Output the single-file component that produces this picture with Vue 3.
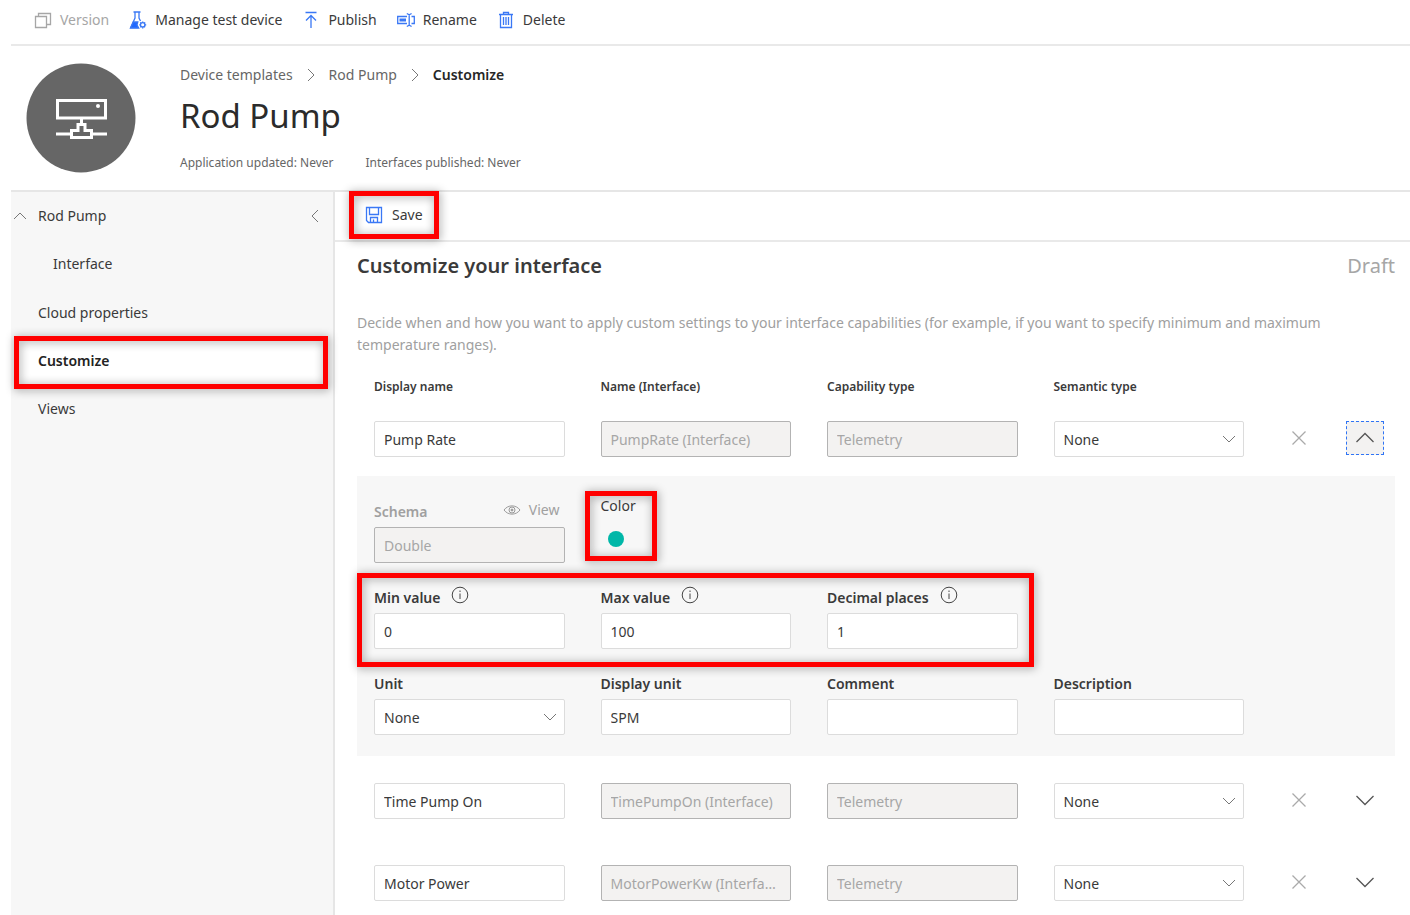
<script setup>
import { ref } from 'vue'

const rows = ref([
  { id: 'pump-rate', display: 'Pump Rate', name: 'PumpRate (Interface)', type: 'Telemetry', open: true },
  { id: 'time-pump-on', display: 'Time Pump On', name: 'TimePumpOn (Interface)', type: 'Telemetry', open: false },
  { id: 'motor-power', display: 'Motor Power', name: 'MotorPowerKw (Interface)', type: 'Telemetry', open: false }
])
const columns = ['Display name', 'Name (Interface)', 'Capability type', 'Semantic type']
const limits = [
  { id: 'min', label: 'Min value', value: '0' },
  { id: 'max', label: 'Max value', value: '100' },
  { id: 'decimals', label: 'Decimal places', value: '1' }
]
const texts = [
  { id: 'display-unit', label: 'Display unit', value: 'SPM' },
  { id: 'comment', label: 'Comment', value: '' },
  { id: 'description', label: 'Description', value: '' }
]
</script>

<template>
  <div class="page">
    <div class="toolbar" role="toolbar" aria-label="Template actions">
      <button type="button" disabled>
        <svg class="icon" viewBox="0 0 18 18"><path d="M1.5 5.5h11v11h-11zM4.500 5V2.500h12v11H13" /></svg>
        Version
      </button>
      <button type="button">
        <svg class="icon" viewBox="0 0 18 18">
          <path d="M4.500 1h7M6 1v6L1.700 16.500h7.500M10 1v6l1.500 3" />
          <path class="fill" d="M4.300 11h4.500l-.8 3 1.700 3H1.500z" />
          <circle cx="13.700" cy="13.800" r="2.200" />
          <path d="M13.700 10.400v1M13.700 16.200v1.200M10.300 13.800h1.100M16 13.800h1.200M11.300 11.400l.8.8M15.300 15.400l.8.8M16.100 11.400l-.8.8M12.100 15.400l-.8.8" />
        </svg>
        Manage test device
      </button>
      <button type="button">
        <svg class="icon" viewBox="0 0 18 18"><path d="M3.500 1.500h11M9 17V4.500M4 9.500l5-5 5 5" /></svg>
        Publish
      </button>
      <button type="button">
        <svg class="icon" viewBox="0 0 18 18">
          <path d="M10 5.500H.7v7H10M14.500 5.500h2.800v7h-2.800M9.800 2.500l2.400 1.300 2.400-1.300M12.200 3.800v10.400M9.800 15.500l2.400-1.300 2.400 1.300" />
          <path class="thick" d="M2.500 9H9" />
        </svg>
        Rename
      </button>
      <button type="button">
        <svg class="icon" viewBox="0 0 18 18"><path d="M2 3.500h14M6.500 3.500v-2h5v2M3.500 3.500v13h11v-13M6.500 6v8M9 6v8M11.500 6v8" /></svg>
        Delete
      </button>
    </div>

    <header class="header">
      <svg class="avatar" viewBox="0 0 110 110" aria-hidden="true">
        <circle class="disc" cx="55" cy="55" r="54.500" />
        <path d="M31.500 37.500h48v17.500h-48z" />
        <circle class="dot" cx="72" cy="43" r="2" />
        <path d="M55.500 55v6M30 71h14M67 71h14M45.500 67.500H52v-6h7v6h6.500v7h-20z" />
      </svg>
      <div class="heading">
        <nav class="crumbs" aria-label="Breadcrumb">
          <a href="#templates">Device templates</a>
          <svg class="chev" viewBox="0 0 16 16"><path d="M5 2l6 6-6 6" /></svg>
          <a href="#rod-pump">Rod Pump</a>
          <svg class="chev" viewBox="0 0 16 16"><path d="M5 2l6 6-6 6" /></svg>
          <strong>Customize</strong>
        </nav>
        <h1>Rod Pump</h1>
        <p class="meta"><span>Application updated: Never</span><span>Interfaces published: Never</span></p>
      </div>
    </header>

    <div class="body">
      <nav class="side" aria-label="Template sections">
        <button type="button" class="collapse" aria-label="Collapse navigation">
          <svg viewBox="0 0 16 16"><path d="M11 2L5 8l6 6" /></svg>
        </button>
        <a href="#rod-pump" class="parent">
          <svg viewBox="0 0 16 16"><path d="M2 11l6-6 6 6" /></svg>
          Rod Pump
        </a>
        <a href="#interface" class="child">Interface</a>
        <div class="group">
          <a href="#cloud">Cloud properties</a>
          <a href="#customize" class="current" aria-current="page">Customize</a>
          <a href="#views">Views</a>
        </div>
      </nav>

      <main class="main">
        <div class="commands">
          <button type="button" class="save">
            <svg class="icon" viewBox="0 0 18 18"><path d="M1.500 1.500h15v15H3.500l-2-2zM4.500 1.500v7h9v-7M5.500 16.500v-5h7v5M8.500 13.500v3" /></svg>
            Save
          </button>
        </div>

        <section class="content">
          <div class="title">
            <h2>Customize your interface</h2>
            <span>Draft</span>
          </div>
          <p class="intro">Decide when and how you want to apply custom settings to your interface capabilities (for example, if you want to specify minimum and maximum temperature ranges).</p>

          <div class="grid columns">
            <span v-for="c in columns" :key="c">{{ c }}</span>
          </div>

          <div v-for="row in rows" :key="row.id" class="entry">
            <div class="grid">
              <input :value="row.display" aria-label="Display name" />
              <input :value="row.name" aria-label="Name (Interface)" disabled />
              <input :value="row.type" aria-label="Capability type" disabled />
              <div class="drop">
                <select aria-label="Semantic type"><option>None</option></select>
                <svg viewBox="0 0 16 16"><path d="M2 5l6 6 6-6" /></svg>
              </div>
              <div class="actions">
                <button type="button" class="remove" :aria-label="'Remove ' + row.display">
                  <svg viewBox="0 0 16 16"><path d="M1.500 1.500l13 13M14.500 1.500l-13 13" /></svg>
                </button>
                <button type="button" :class="{ focused: row.open }" :aria-expanded="row.open" :aria-label="'Details of ' + row.display" @click="row.open = !row.open">
                  <svg viewBox="0 0 20 20"><path :d="row.open ? 'M1.500 14L10 5.500l8.500 8.500' : 'M1.500 6l8.500 8.500L18.500 6'" /></svg>
                </button>
              </div>
            </div>

            <div v-if="row.open" class="panel">
              <div class="grid">
                <div class="field">
                  <div class="schema-head">
                    <label for="schema">Schema</label>
                    <button type="button" disabled>
                      <svg viewBox="0 0 18 18"><path d="M1 9c4-5.500 12-5.500 16 0-4 5.500-12 5.500-16 0z" /><circle cx="9" cy="9" r="3" /><circle class="pupil" cx="9" cy="9" r="1" /></svg>
                      View
                    </button>
                  </div>
                  <input id="schema" value="Double" disabled />
                </div>
                <div class="color">
                  <span id="color-label">Color</span>
                  <button type="button" class="swatch" aria-labelledby="color-label"></button>
                </div>
              </div>
              <div class="grid">
                <div class="limits">
                  <div v-for="f in limits" :key="f.id" class="field">
                    <label :for="f.id">{{ f.label }}
                      <svg class="info" viewBox="0 0 18 18"><circle cx="9" cy="9" r="7.800" /><path d="M9 7.500v5.500M9 4.500v1.500" /></svg>
                    </label>
                    <input :id="f.id" :value="f.value" />
                  </div>
                </div>
              </div>
              <div class="grid">
                <div class="field">
                  <label for="unit">Unit</label>
                  <div class="drop">
                    <select id="unit"><option>None</option></select>
                    <svg viewBox="0 0 16 16"><path d="M2 5l6 6 6-6" /></svg>
                  </div>
                </div>
                <div v-for="f in texts" :key="f.id" class="field">
                  <label :for="f.id">{{ f.label }}</label>
                  <input :id="f.id" :value="f.value" />
                </div>
              </div>
            </div>
          </div>
        </section>
      </main>
    </div>
  </div>
</template>

<style>
body {
  background: #fff;
}
</style>

<style scoped>
*,
*::after {
  box-sizing: border-box;
}
.page {
  display: flex;
  flex-direction: column;
  min-height: 100vh;
  padding-left: 11px;
  font: 14px/22px "Noto Sans", "Open Sans", sans-serif;
  color: #3a3a3a;
}
button,
input,
select {
  font: inherit;
  color: inherit;
}
button {
  display: flex;
  align-items: center;
  padding: 0;
  border: 0;
  background: none;
}
a {
  color: inherit;
  text-decoration: none;
}
svg {
  flex: none;
  width: 16px;
  height: 16px;
  fill: none;
  stroke: #777;
  stroke-width: 1;
}
.icon {
  width: 18px;
  height: 18px;
  stroke: #3a78f5;
  stroke-width: 1.3;
}
.icon .fill {
  fill: #1f68ff;
}
.icon .thick {
  stroke-width: 3;
}

.toolbar {
  display: flex;
  gap: 20px;
  height: 46px;
  padding: 0 23px 4px;
  border-bottom: 2px solid #e9e9e9;
}
.toolbar button {
  gap: 8px;
}
.toolbar button:disabled {
  color: #a6a6a6;
}
.toolbar button:disabled .icon {
  stroke: #a6a6a6;
}

.header {
  display: flex;
  gap: 44px;
  padding: 17px 15px 16px;
  border-bottom: 2px solid #e6e6e6;
}
.avatar {
  width: 110px;
  height: 110px;
  stroke: #fff;
  stroke-width: 3;
}
.avatar .disc {
  fill: #666;
  stroke: none;
}
.avatar .dot {
  fill: #fff;
  stroke: none;
}
.crumbs {
  display: flex;
  align-items: center;
  gap: 10px;
  margin-top: 1px;
  color: #666;
}
.crumbs strong {
  font-weight: 600;
  color: #262626;
}
h1 {
  margin: 7px 0 13px;
  font-size: 33px;
  line-height: 46px;
  font-weight: 400;
  color: #2b2b2b;
}
.meta {
  display: flex;
  gap: 32px;
  margin: 0;
  font-size: 12px;
  color: #666;
}

.body {
  display: flex;
  flex: 1;
}
.side {
  position: relative;
  flex: none;
  width: 324px;
  border-right: 2px solid #e6e6e6;
  background: #f7f7f7;
}
.side a {
  display: flex;
  align-items: center;
  height: 48px;
  padding: 0 27px;
}
.side .parent {
  gap: 10px;
  padding-left: 1px;
}
.side .child {
  padding-left: 42px;
}
.group {
  margin-top: 1px;
}
.collapse {
  position: absolute;
  top: 16px;
  right: 10px;
}
.side .current {
  position: relative;
  font-weight: 600;
  color: #222;
  background: linear-gradient(#fff, #fff) 3px 0 / calc(100% - 8px) 100% no-repeat;
}
.side .current::after,
.save::after,
.color::after,
.limits::after {
  content: "";
  position: absolute;
  border: 5px solid #f00;
  filter: drop-shadow(1px 1px 5px rgba(0, 0, 0, 0.4));
  pointer-events: none;
}
.side .current::after {
  inset: -1px 5px -4px 3px;
}

.main {
  flex: 1;
  min-width: 0;
}
.commands {
  display: flex;
  height: 50px;
  padding: 0 14px 2px;
  border-bottom: 2px solid #e9e9e9;
}
.save {
  position: relative;
  gap: 9px;
  padding: 0 16px;
}
.save::after {
  inset: -1px 0;
}
.content {
  padding: 10px 15px 0 22px;
}
.title {
  display: flex;
  justify-content: space-between;
  font-size: 20px;
  line-height: 28px;
}
.title h2 {
  margin: 0;
  font-size: 20px;
  font-weight: 600;
}
.title span {
  color: #a6a6a6;
}
.intro {
  margin: 32px 0 20px;
  color: #a0a0a0;
}

.grid {
  display: grid;
  grid-template-columns: repeat(4, minmax(0, 1fr)) 104px;
  column-gap: 36px;
  padding: 0 11px 0 17px;
}
.columns {
  margin-bottom: 23px;
  font-size: 12px;
  font-weight: 600;
}
.entry + .entry {
  margin-top: 46px;
}
input,
select {
  display: block;
  width: 100%;
  height: 36px;
  padding: 1px 9px 0;
  border: 1px solid #dcdcdc;
  border-radius: 2px;
  background: #fff;
  text-overflow: ellipsis;
}
select {
  padding-top: 2px;
  appearance: none;
}
input:disabled {
  color: #a6a6a6;
  border-color: #b3b3b3;
  background: #f3f2f1;
}
.drop {
  position: relative;
}
.drop svg {
  position: absolute;
  top: 10px;
  right: 7px;
  pointer-events: none;
}
.actions {
  display: flex;
  gap: 28px;
}
.actions button {
  justify-content: center;
  width: 38px;
  height: 34px;
}
.actions svg {
  width: 20px;
  height: 20px;
  stroke: #555;
  stroke-width: 1.3;
}
.actions .remove svg {
  width: 16px;
  height: 16px;
  stroke: #aaa;
}
.actions .focused {
  border: 1px dashed #2f74f5;
  background: #f3f2f1;
}

.panel {
  display: grid;
  gap: 14px;
  margin: 19px 0 -19px;
  padding: 15px 0 21px;
  background: #f7f7f7;
}
.panel .grid {
  align-items: end;
}
.field {
  display: flex;
  flex-direction: column;
}
.field label {
  display: flex;
  gap: 11px;
  height: 36px;
  padding-top: 10px;
  font-weight: 600;
}
.schema-head {
  display: flex;
  justify-content: space-between;
  height: 36px;
  padding-right: 5px;
  color: #a0a0a0;
}
.schema-head svg {
  width: 18px;
  height: 18px;
  stroke: #999;
}
.schema-head button {
  gap: 8px;
  height: 38px;
  color: #a0a0a0;
}
.pupil {
  fill: #999;
}
.color {
  position: relative;
  align-self: start;
  padding-top: 4px;
}
.color::after {
  inset: 0 auto -14px -16px;
  width: 72px;
}
.swatch {
  width: 16px;
  height: 16px;
  margin: 14px 0 0 7px;
  border-radius: 50%;
  background: #00b7a8;
}
.limits {
  position: relative;
  display: grid;
  grid-column: span 3;
  grid-template-columns: repeat(3, minmax(0, 1fr));
  column-gap: 36px;
}
.limits::after {
  inset: -4px -16px -18px -17px;
}
.info {
  width: 18px;
  height: 18px;
  margin-top: -1px;
  stroke: #444;
}
</style>
